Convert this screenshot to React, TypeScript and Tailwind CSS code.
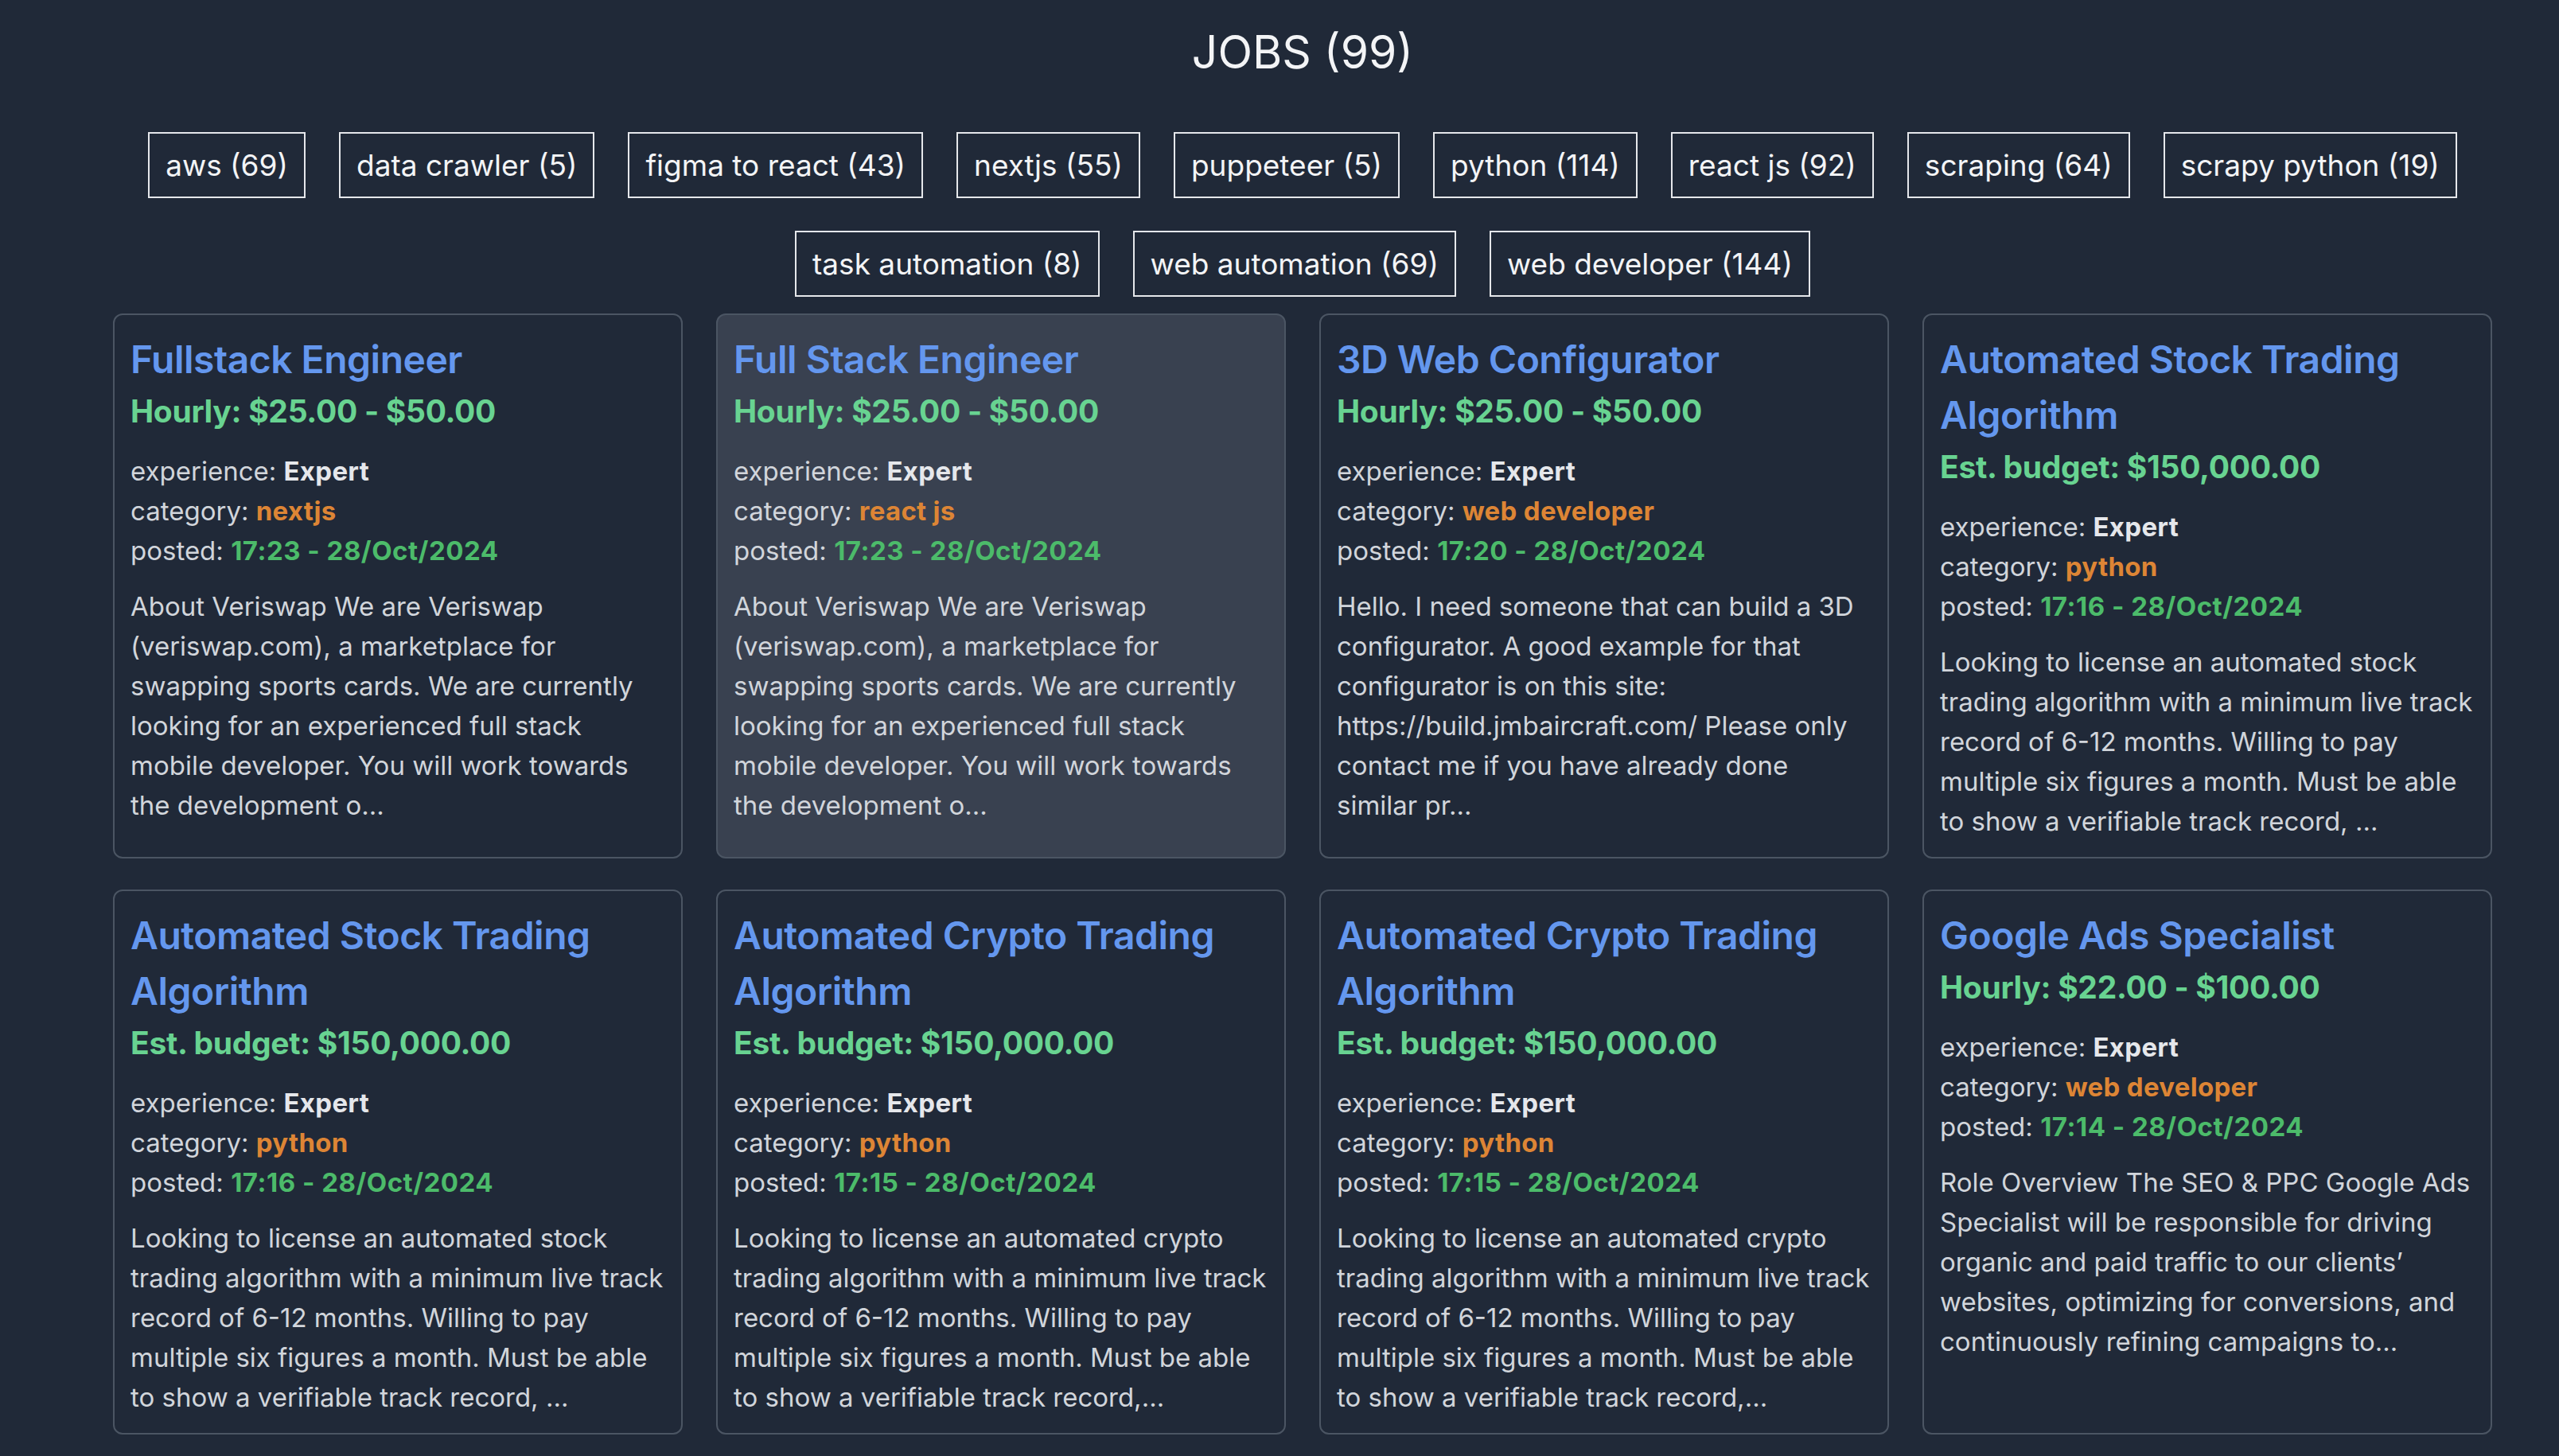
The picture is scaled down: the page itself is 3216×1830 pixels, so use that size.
type Job = {
  title: string;
  pay: string;
  category: string;
  posted: string;
  desc: string;
};

const tags = [
  "aws (69)",
  "data crawler (5)",
  "figma to react (43)",
  "nextjs (55)",
  "puppeteer (5)",
  "python (114)",
  "react js (92)",
  "scraping (64)",
  "scrapy python (19)",
  "task automation (8)",
  "web automation (69)",
  "web developer (144)",
];

const veriswap =
  "About Veriswap We are Veriswap (veriswap.com), a marketplace for swapping sports cards. We are currently looking for an experienced full stack mobile developer. You will work towards the development o...";

const jobs: Job[] = [
  { title: "Fullstack Engineer", pay: "Hourly: $25.00 - $50.00", category: "nextjs", posted: "17:23 - 28/Oct/2024", desc: veriswap },
  { title: "Full Stack Engineer", pay: "Hourly: $25.00 - $50.00", category: "react js", posted: "17:23 - 28/Oct/2024", desc: veriswap },
  {
    title: "3D Web Configurator",
    pay: "Hourly: $25.00 - $50.00",
    category: "web developer",
    posted: "17:20 - 28/Oct/2024",
    desc: "Hello. I need someone that can build a 3D configurator. A good example for that configurator is on this site: https://build.jmbaircraft.com/ Please only contact me if you have already done similar pr...",
  },
  {
    title: "Automated Stock Trading Algorithm",
    pay: "Est. budget: $150,000.00",
    category: "python",
    posted: "17:16 - 28/Oct/2024",
    desc: "Looking to license an automated stock trading algorithm with a minimum live track record of 6-12 months. Willing to pay multiple six figures a month. Must be able to show a verifiable track record, ...",
  },
  {
    title: "Automated Stock Trading Algorithm",
    pay: "Est. budget: $150,000.00",
    category: "python",
    posted: "17:16 - 28/Oct/2024",
    desc: "Looking to license an automated stock trading algorithm with a minimum live track record of 6-12 months. Willing to pay multiple six figures a month. Must be able to show a verifiable track record, ...",
  },
  {
    title: "Automated Crypto Trading Algorithm",
    pay: "Est. budget: $150,000.00",
    category: "python",
    posted: "17:15 - 28/Oct/2024",
    desc: "Looking to license an automated crypto trading algorithm with a minimum live track record of 6-12 months. Willing to pay multiple six figures a month. Must be able to show a verifiable track record,...",
  },
  {
    title: "Automated Crypto Trading Algorithm",
    pay: "Est. budget: $150,000.00",
    category: "python",
    posted: "17:15 - 28/Oct/2024",
    desc: "Looking to license an automated crypto trading algorithm with a minimum live track record of 6-12 months. Willing to pay multiple six figures a month. Must be able to show a verifiable track record,...",
  },
  {
    title: "Google Ads Specialist",
    pay: "Hourly: $22.00 - $100.00",
    category: "web developer",
    posted: "17:14 - 28/Oct/2024",
    desc: "Role Overview The SEO & PPC Google Ads Specialist will be responsible for driving organic and paid traffic to our clients\u2019 websites, optimizing for conversions, and continuously refining campaigns to...",
  },
];

function JobCard({ job, active }: { job: Job; active?: boolean }) {
  return (
    <div
      className={
        "border-2 border-[#4b5563] rounded-[12px] px-[20px] pt-[21px] pb-[20px] " +
        (active ? "bg-[#394150]" : "bg-[#202938]")
      }
    >
      <h2 className="text-[48px] leading-[70px] font-semibold text-[#6497ee] tracking-[-0.5px]">{job.title}</h2>
      <p className="mt-[2px] text-[39px] leading-[56px] font-bold text-[#68d391] tracking-[-0.3px]">{job.pay}</p>
      <div className="mt-[22px] text-[33px] leading-[50px] text-[#d1d5db]">
        <p>
          experience: <span className="font-bold text-[#e5e7eb] tracking-[0.3px]">Expert</span>
        </p>
        <p>
          category: <span className="font-bold text-[#dd8535] tracking-[0.3px]">{job.category}</span>
        </p>
        <p>
          posted: <span className="font-bold text-[#4cbb6a] tracking-[0.5px]">{job.posted}</span>
        </p>
      </div>
      <p className="mt-[20px] text-[33px] leading-[50px] text-[#d1d5db]">{job.desc}</p>
    </div>
  );
}

export default function App() {
  return (
    <div className="min-h-screen bg-[#202938] text-[#f3f4f6]" style={{ fontFamily: "Inter, 'Noto Sans', sans-serif" }}>
      <div className="pl-[142px] pr-[84px] pt-[30px] pb-[40px]">
        <h1 className="text-center text-[57px] leading-[72px]">JOBS (99)</h1>

        <div className="mt-[64px] flex flex-wrap justify-center gap-x-[42px] gap-y-[41px] px-[40px]">
          {tags.map((t) => (
            <button
              key={t}
              className="border-2 border-[#e5e7eb] px-[20px] py-[11px] text-[37px] leading-[57px] text-[#f3f4f6]"
            >
              {t}
            </button>
          ))}
        </div>

        <div className="mt-[21px] grid grid-cols-4 gap-x-[42px] gap-y-[39px]">
          {jobs.map((j, i) => (
            <JobCard key={i} job={j} active={i === 1} />
          ))}
        </div>
      </div>
    </div>
  );
}
